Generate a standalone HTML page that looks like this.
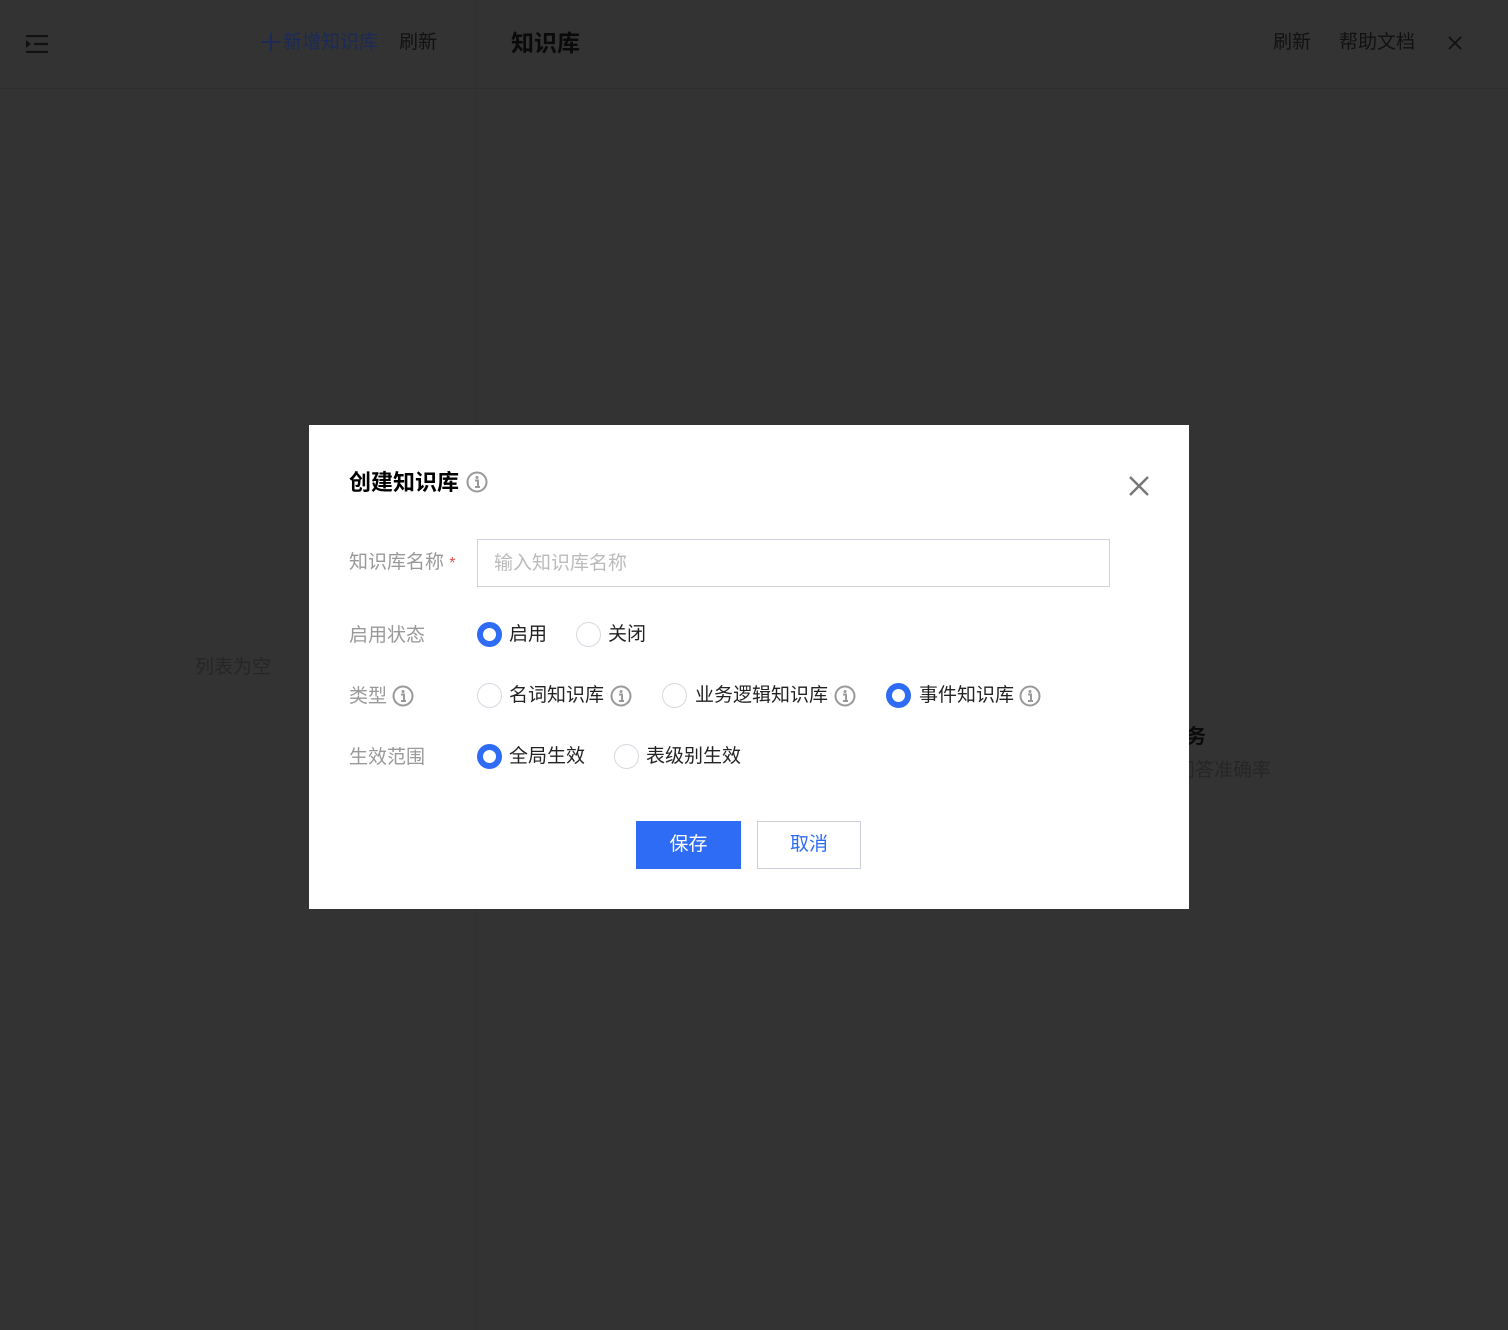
<!DOCTYPE html>
<html><head><meta charset="utf-8"><style>
*{margin:0;padding:0;box-sizing:border-box}
body{width:1508px;height:1330px;background:#333;position:relative;overflow:hidden;font-family:"Liberation Sans","Noto Sans CJK SC",sans-serif}
.a{position:absolute;white-space:nowrap;line-height:1}
.hdr{position:absolute;left:0;top:0;width:1508px;height:89px;border-bottom:1px solid #2e2e2e}
.vd{position:absolute;left:476px;top:0;width:1px;height:1330px;background:#2f2f2f}
.modal{position:absolute;left:309px;top:425px;width:880px;height:484px;background:#fff}
.lbl{color:#999;font-size:19px}
.txt{color:#222;font-size:19px}
.r{position:absolute;width:25px;height:25px;border-radius:50%;border:1px solid #d6d9df;background:#fff}
.r.on{border:6px solid #2f6cf6}
</style></head><body>
<div class="hdr"></div>
<div class="vd"></div>
<svg class="a" style="left:26px;top:35px" width="23" height="18" viewBox="0 0 23 18"><path d="M0 1h22M8 9h14M0 17h22" stroke="#111" stroke-width="2.2"/><path d="M0 5l5 4-5 4z" fill="#111"/></svg>
<svg class="a" style="left:262px;top:33px" width="18" height="18"><path d="M9 0v18M0 9h18" stroke="#1c2a55" stroke-width="2"/></svg>
<div class="a" style="left:283px;top:33px;font-size:19px;color:#1c2a55">新增知识库</div>
<div class="a" style="left:399px;top:33px;font-size:19px;color:#111">刷新</div>
<div class="a" style="left:511px;top:32px;font-size:23px;font-weight:bold;color:#0a0a0a">知识库</div>
<div class="a" style="left:1273px;top:33px;font-size:19px;color:#111">刷新</div>
<div class="a" style="left:1339px;top:33px;font-size:19px;color:#111">帮助文档</div>
<svg class="a" style="left:1448px;top:36px" width="14" height="14"><path d="M1 1L13 13M13 1L1 13" stroke="#111" stroke-width="1.8"/></svg>
<div class="a" style="left:195px;top:658px;font-size:19px;color:#262626">列表为空</div>
<div class="a" style="left:1186px;top:727px;font-size:20px;font-weight:bold;color:#0a0a0a">务</div>
<div class="a" style="left:1176px;top:761px;font-size:19px;color:#262626">问答准确率</div>

<div class="modal">
<div class="a" style="left:40px;top:47px;font-size:22px;font-weight:bold;color:#000">创建知识库</div>
<svg class="a" style="left:157px;top:46px" width="22" height="22" viewBox="0 0 22 22"><circle cx="11" cy="11" r="9.5" fill="none" stroke="#999" stroke-width="2"/><circle cx="11" cy="6.5" r="1.5" fill="#999"/><path d="M9 9.5h3v6.5M9 16h5" stroke="#999" stroke-width="2" fill="none"/></svg>
<svg class="a" style="left:820px;top:51px" width="20" height="20"><path d="M1 1L19 19M19 1L1 19" stroke="#777" stroke-width="2.4"/></svg>

<div class="a lbl" style="left:40px;top:128px">知识库名称 <span style="color:#e34d4d;font-size:16px">*</span></div>
<div class="a" style="left:168px;top:114px;width:633px;height:48px;border:1px solid #d0d3da"></div>
<div class="a" style="left:185px;top:129px;font-size:19px;color:#bbb">输入知识库名称</div>

<div class="a lbl" style="left:40px;top:201px">启用状态</div>
<div class="r on" style="left:168px;top:197px"></div>
<div class="a txt" style="left:200px;top:200px">启用</div>
<div class="r" style="left:267px;top:197px"></div>
<div class="a txt" style="left:299px;top:200px">关闭</div>

<div class="a lbl" style="left:40px;top:262px">类型</div>
<svg class="a" style="left:83px;top:260px" width="22" height="22" viewBox="0 0 22 22"><circle cx="11" cy="11" r="9.5" fill="none" stroke="#999" stroke-width="2"/><circle cx="11" cy="6.5" r="1.5" fill="#999"/><path d="M9 9.5h3v6.5M9 16h5" stroke="#999" stroke-width="2" fill="none"/></svg>
<div class="r" style="left:168px;top:258px"></div>
<div class="a txt" style="left:200px;top:261px">名词知识库</div>
<svg class="a" style="left:301px;top:260px" width="22" height="22" viewBox="0 0 22 22"><circle cx="11" cy="11" r="9.5" fill="none" stroke="#999" stroke-width="2"/><circle cx="11" cy="6.5" r="1.5" fill="#999"/><path d="M9 9.5h3v6.5M9 16h5" stroke="#999" stroke-width="2" fill="none"/></svg>
<div class="r" style="left:353px;top:258px"></div>
<div class="a txt" style="left:386px;top:261px">业务逻辑知识库</div>
<svg class="a" style="left:525px;top:260px" width="22" height="22" viewBox="0 0 22 22"><circle cx="11" cy="11" r="9.5" fill="none" stroke="#999" stroke-width="2"/><circle cx="11" cy="6.5" r="1.5" fill="#999"/><path d="M9 9.5h3v6.5M9 16h5" stroke="#999" stroke-width="2" fill="none"/></svg>
<div class="r on" style="left:577px;top:258px"></div>
<div class="a txt" style="left:610px;top:261px">事件知识库</div>
<svg class="a" style="left:710px;top:260px" width="22" height="22" viewBox="0 0 22 22"><circle cx="11" cy="11" r="9.5" fill="none" stroke="#999" stroke-width="2"/><circle cx="11" cy="6.5" r="1.5" fill="#999"/><path d="M9 9.5h3v6.5M9 16h5" stroke="#999" stroke-width="2" fill="none"/></svg>

<div class="a lbl" style="left:40px;top:323px">生效范围</div>
<div class="r on" style="left:168px;top:319px"></div>
<div class="a txt" style="left:200px;top:322px">全局生效</div>
<div class="r" style="left:305px;top:319px"></div>
<div class="a txt" style="left:337px;top:322px">表级别生效</div>

<div class="a" style="left:327px;top:396px;width:105px;height:48px;background:#2f6cf6;color:#fff;font-size:19px;line-height:48px;text-align:center">保存</div>
<div class="a" style="left:448px;top:396px;width:104px;height:48px;border:1px solid #ccd0da;color:#2f6cf6;font-size:19px;line-height:46px;text-align:center">取消</div>
</div>
</body></html>
